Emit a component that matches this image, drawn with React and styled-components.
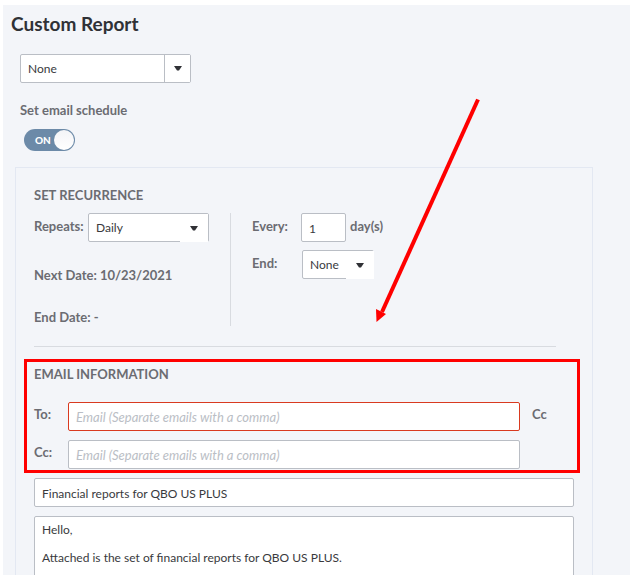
import React, { useState } from 'react';
import styled, { createGlobalStyle } from 'styled-components';

const GlobalStyle = createGlobalStyle`
  *, *::before, *::after {
    box-sizing: border-box;
  }

  body {
    margin: 0;
    background: #fff;
    color: #6b6c72;
    font-family: Lato, "Open Sans", sans-serif;
    font-size: 13px;
    line-height: 18px;
  }

  input, select, textarea, button {
    font: inherit;
  }
`;

const Screen = styled.div`
  height: 100vh;
  padding: 5px 0 0 3px;
  overflow-y: auto;
  scrollbar-width: none;
`;

const Page = styled.main`
  min-height: 100%;
  padding: 8px 37px 0 12px;
  background: #f3f5f9;
`;

const Title = styled.h1`
  margin: 0 0 0 -4px;
  color: #2f3136;
  font-size: 19px;
  font-weight: 700;
  line-height: 22px;
`;

const Intro = styled.div`
  display: flex;
  flex-direction: column;
  align-items: flex-start;
  padding: 19px 5px 16px;
`;

const Label = styled.label`
  font-weight: 700;
`;

const ScheduleLabel = styled(Label)`
  margin: 18px 0 10px;
`;

const SelectBox = styled.div`
  position: relative;
  width: ${props => props.$width}px;
`;

const StyledSelect = styled.select`
  display: block;
  width: 100%;
  height: 29px;
  padding: 1px 7px 0;
  appearance: none;
  background: #fff;
  border: 1px solid #babec5;
  border-radius: 2px;
  color: #393a3d;
  font-size: 12px;
  font-weight: 400;
`;

const Caret = styled.span`
  position: absolute;
  top: 1px;
  right: ${props => (props.$cover ? 0 : 1)}px;
  bottom: ${props => (props.$divided ? 1 : 0)}px;
  width: ${props => (props.$divided ? 26 : 28)}px;
  display: flex;
  align-items: center;
  justify-content: center;
  background: #fff;
  border-left: ${props => (props.$divided ? '1px solid #babec5' : 'none')};
  pointer-events: none;
`;

const Toggle = styled.label`
  position: relative;
  display: flex;
  align-items: center;
  width: 51px;
  height: 22px;
  margin-left: 4px;
  padding-left: 11px;
  background: #6c8aa8;
  border-radius: 11px;
  color: #fff;
  font-size: 10px;
  font-weight: 900;
`;

const ToggleInput = styled.input`
  position: absolute;
  top: 1px;
  right: 1px;
  width: 20px;
  height: 20px;
  margin: 0;
  appearance: none;
  background: linear-gradient(#f3f4f7, #fff);
  border-radius: 50%;
`;

const Panel = styled.section`
  position: relative;
  padding: 18px 18px 0;
  border: 1px solid #e3e8f2;
`;

const Heading = styled.h2`
  margin: 0;
  font-size: 13px;
  font-weight: 700;
  line-height: 18px;
`;

const Recurrence = styled.div`
  display: flex;
  align-items: flex-start;
  margin: 9px 18px 0 0;
  padding-bottom: 20px;
  border-bottom: 1px solid #d8dbe0;
`;

const Column = styled.div`
  display: flex;
  flex-direction: column;
  flex: ${props => (props.$main ? '0 0 197px' : '1')};
  gap: ${props => (props.$main ? 24 : 8)}px;
  padding-left: ${props => (props.$main ? 0 : 21)}px;
  border-right: ${props => (props.$main ? '1px solid #d8dbe0' : 'none')};
`;

const Field = styled.div`
  display: flex;
  align-items: flex-start;
  gap: 4px;
  font-weight: 700;

  > label {
    flex: 0 0 ${props => props.$label}px;
    padding-top: 4px;
  }
`;

const Unit = styled.span`
  padding-top: 4px;
`;

const Info = styled.p`
  margin: 0;
  font-weight: 700;
`;

const TextInput = styled.input`
  display: block;
  width: 100%;
  height: 29px;
  padding: 1px 8px 0 7px;
  background: #fff;
  border: 1px solid ${props => (props.$error ? '#d93a20' : '#babec5')};
  border-radius: 2px;
  color: #393a3d;
  font-size: 12px;
  font-weight: 400;

  &::placeholder {
    color: #babec5;
    font-size: 13px;
    font-style: italic;
  }
`;

const CountInput = styled(TextInput)`
  width: 45px;
`;

const EmailInfo = styled.div`
  position: relative;
  padding: 18px 0 9px;
`;

const Recipients = styled.div`
  display: grid;
  grid-template-columns: 30px 1fr 36px;
  column-gap: 4px;
  row-gap: 9px;
  align-items: start;
  margin: 19px 14px 0 0;

  > label {
    padding-top: 3px;
  }
`;

const CcButton = styled.button`
  margin: 3px 0 0 8px;
  padding: 0;
  background: none;
  border: 0;
  color: #6b6c72;
  font-weight: 700;
  text-align: left;
`;

const Highlight = styled.div`
  position: absolute;
  top: 12px;
  right: -6px;
  bottom: 5px;
  left: -10px;
  border: 3px solid #f00;
  pointer-events: none;
`;

const Message = styled.textarea`
  display: block;
  width: 100%;
  height: 120px;
  margin-top: 9px;
  padding: 6px 7px;
  background: #fff;
  border: 1px solid #babec5;
  border-radius: 2px;
  color: #393a3d;
  font-size: 12px;
  line-height: 14px;
  resize: none;
`;

const Arrow = styled.svg`
  position: absolute;
  top: -70px;
  left: 359px;
  width: 106px;
  height: 226px;
  pointer-events: none;
`;

function Select({ id, label, width, value, onChange, options, divided, cover }) {
  return (
    <SelectBox $width={width}>
      <StyledSelect id={id} aria-label={label} value={value} onChange={onChange}>
        {options.map(option => (
          <option key={option}>{option}</option>
        ))}
      </StyledSelect>
      <Caret $divided={divided} $cover={cover}>
        <svg width="8" height="5" viewBox="0 0 8 5" aria-hidden="true">
          <path d="M0 0h8L5 4.5H3z" fill="#303136" />
        </svg>
      </Caret>
    </SelectBox>
  );
}

export default function App() {
  const [group, setGroup] = useState('None');
  const [enabled, setEnabled] = useState(true);
  const [repeats, setRepeats] = useState('Daily');
  const [every, setEvery] = useState('1');
  const [end, setEnd] = useState('None');
  const [to, setTo] = useState('');
  const [cc, setCc] = useState('');
  const [subject, setSubject] = useState('Financial reports for QBO US PLUS');
  const [message, setMessage] = useState(
    'Hello,\n\nAttached is the set of financial reports for QBO US PLUS.'
  );

  return (
    <Screen>
      <GlobalStyle />
      <Page>
        <Title>Custom Report</Title>

        <Intro>
          <Select
            id="group"
            label="Report group"
            width={171}
            divided
            value={group}
            onChange={e => setGroup(e.target.value)}
            options={['None', 'Management']}
          />
          <ScheduleLabel htmlFor="schedule">Set email schedule</ScheduleLabel>
          <Toggle>
            {enabled ? 'ON' : 'OFF'}
            <ToggleInput
              id="schedule"
              type="checkbox"
              checked={enabled}
              onChange={e => setEnabled(e.target.checked)}
            />
          </Toggle>
        </Intro>

        <Panel>
          <Heading>SET RECURRENCE</Heading>
          <Recurrence>
            <Column $main>
              <Field $label={50}>
                <label htmlFor="repeats">Repeats:</label>
                <Select
                  id="repeats"
                  width={121}
                  value={repeats}
                  onChange={e => setRepeats(e.target.value)}
                  options={['Daily', 'Weekly', 'Monthly']}
                />
              </Field>
              <Info>Next Date: 10/23/2021</Info>
              <Info>End Date: -</Info>
            </Column>
            <Column>
              <Field $label={45}>
                <label htmlFor="every">Every:</label>
                <CountInput id="every" value={every} onChange={e => setEvery(e.target.value)} />
                <Unit>day(s)</Unit>
              </Field>
              <Field $label={46}>
                <label htmlFor="end">End:</label>
                <Select
                  id="end"
                  width={72}
                  cover
                  value={end}
                  onChange={e => setEnd(e.target.value)}
                  options={['None', 'By']}
                />
              </Field>
            </Column>
          </Recurrence>

          <EmailInfo>
            <Heading>EMAIL INFORMATION</Heading>
            <Recipients>
              <Label htmlFor="to">To:</Label>
              <TextInput
                id="to"
                $error
                placeholder="Email (Separate emails with a comma)"
                value={to}
                onChange={e => setTo(e.target.value)}
              />
              <CcButton type="button">Cc</CcButton>
              <Label htmlFor="cc">Cc:</Label>
              <TextInput
                id="cc"
                placeholder="Email (Separate emails with a comma)"
                value={cc}
                onChange={e => setCc(e.target.value)}
              />
            </Recipients>
            <Highlight />
          </EmailInfo>

          <TextInput
            aria-label="Subject"
            value={subject}
            onChange={e => setSubject(e.target.value)}
          />
          <Message
            aria-label="Message"
            value={message}
            onChange={e => setMessage(e.target.value)}
          />

          <Arrow viewBox="0 0 106 226" aria-hidden="true">
            <path d="M103 1.5L7 214" fill="none" stroke="#f00" strokeWidth="4" />
            <path d="M1 211L11 216L1.5 224z" fill="#f00" />
          </Arrow>
        </Panel>
      </Page>
    </Screen>
  );
}
